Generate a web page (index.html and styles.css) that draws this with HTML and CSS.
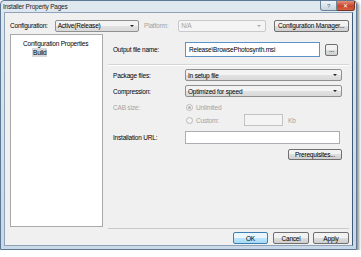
FILE: index.html
```html
<!DOCTYPE html>
<html lang="en">
<head>
    <meta charset="UTF-8">
    <title>Installer Property Pages</title>
    <link rel="stylesheet" href="styles.css">
</head>
<body>
    <div class="window">
        <div class="titlebar">
            <span class="title">Installer Property Pages</span>
            <div class="caption">
                <span class="cap help">?</span>
                <span class="cap close">&#x2715;</span>
            </div>
        </div>
        <div class="client">
            <div class="config-bar">
                <span class="label">Configuration:</span>
                <div class="combo config-combo"><span>Active(Release)</span><span class="arrow"></span></div>
                <span class="label disabled platform-label">Platform:</span>
                <div class="combo platform-combo disabled"><span>N/A</span><span class="arrow"></span></div>
                <button class="btn manager-btn">Configuration Manager...</button>
            </div>
            <div class="main">
                <div class="tree">
                    <div class="node">Configuration Properties</div>
                    <div class="node child"><span class="selected">Build</span></div>
                </div>
                <div class="pane">
                    <div class="row output-row">
                        <span class="field-label">Output file name:</span>
                        <div class="textbox focused output-box">Release\BrowsePhotosynth.msi</div>
                        <button class="btn browse-btn">...</button>
                    </div>
                    <div class="separator"></div>
                    <div class="row combo-row">
                        <span class="field-label">Package files:</span>
                        <div class="combo wide"><span>In setup file</span><span class="arrow"></span></div>
                    </div>
                    <div class="row combo-row">
                        <span class="field-label">Compression:</span>
                        <div class="combo wide"><span>Optimized for speed</span><span class="arrow"></span></div>
                    </div>
                    <div class="row radio-row">
                        <span class="field-label disabled">CAB size:</span>
                        <span class="radio checked"></span>
                        <span class="disabled">Unlimited</span>
                    </div>
                    <div class="row custom-row">
                        <span class="field-label"></span>
                        <span class="radio"></span>
                        <span class="disabled custom-label">Custom:</span>
                        <div class="textbox disabled-box small-box"></div>
                        <span class="disabled kb">Kb</span>
                    </div>
                    <div class="row url-row">
                        <span class="field-label">Installation URL:</span>
                        <div class="textbox url-box"></div>
                    </div>
                    <div class="prereq">
                        <button class="btn prereq-btn">Prerequisites...</button>
                    </div>
                </div>
            </div>
            <div class="footer">
                <button class="btn default-btn">OK</button>
                <button class="btn">Cancel</button>
                <button class="btn">Apply</button>
            </div>
        </div>
    </div>
</body>
</html>
```

FILE: styles.css
```css
body {
    margin: 0;
    padding: 0;
    background-color: #fff;
    font-family: "Liberation Sans", Arial, sans-serif;
    font-size: 6.5px;
    letter-spacing: -0.2px;
    color: #000;
}
.window {
    width: 355px;
    height: 248px;
    border: 1px solid #5d7893;
    border-radius: 4px 4px 0 0;
    background: linear-gradient(#dfe7ef, #c9d8e7);
    box-shadow: 2px 2px 3px rgba(0, 0, 0, 0.45);
    display: flex;
    flex-direction: column;
}
.titlebar {
    height: 11px;
    display: flex;
    align-items: center;
    justify-content: space-between;
    padding-left: 2px;
}
.title {
    color: #1b1b1b;
}
.caption {
    display: flex;
    align-self: flex-start;
    margin-right: 1px;
}
.cap {
    height: 9px;
    display: flex;
    align-items: center;
    justify-content: center;
    font-size: 6px;
    border: 1px solid #6f8397;
    border-top: none;
    color: #fff;
}
.help {
    width: 15px;
    background: linear-gradient(#eef3f8, #c6d3e0);
    color: #51667c;
    border-radius: 0 0 0 3px;
}
.close {
    width: 17px;
    background: linear-gradient(#e58f7c, #c8432c 55%, #d4603f);
    border-left: none;
    border-color: #7a3024;
    border-radius: 0 0 3px 0;
}
.client {
    flex: 1;
    margin: 0 3px 3px 3px;
    background: #f0f0f0;
    border: 1px solid #8ea3b9;
    border-right-color: #3f5b78;
    display: flex;
    flex-direction: column;
    padding: 0 3px 0 5px;
}
.config-bar {
    display: flex;
    align-items: center;
    margin-top: 6px;
    height: 13px;
}
.label {
    margin-right: 7px;
}
.disabled {
    color: #a3a3a3;
}
.combo {
    height: 10px;
    border: 1px solid #8f9090;
    border-radius: 2px;
    background: linear-gradient(#f3f3f3 45%, #e2e2e2 50%, #d9d9d9);
    display: flex;
    align-items: center;
    justify-content: space-between;
    padding: 0 4px 0 2px;
    box-sizing: content-box;
}
.combo.disabled {
    background: #f4f4f4;
    border-color: #c9c9c9;
}
.arrow {
    width: 0;
    height: 0;
    border-left: 2px solid transparent;
    border-right: 2px solid transparent;
    border-top: 2px solid #222;
}
.combo.disabled .arrow {
    border-top-color: #a8a8a8;
}
.config-combo {
    width: 78px;
}
.platform-label {
    margin-left: 5px;
    margin-right: 10px;
}
.platform-combo {
    width: 81px;
}
.btn {
    font-family: inherit;
    font-size: 6.5px;
    letter-spacing: -0.2px;
    color: #000;
    height: 12px;
    padding: 0;
    border: 1px solid #707070;
    border-radius: 2px;
    background: linear-gradient(#f2f2f2 45%, #dedede 50%, #cfcfcf);
    display: flex;
    align-items: center;
    justify-content: center;
}
.manager-btn {
    width: 77px;
    margin-left: 8px;
}
.main {
    flex: 1;
    display: flex;
    margin-top: 2px;
    gap: 5px;
}
.tree {
    width: 91px;
    background: #fff;
    border: 1px solid #a9a9a9;
    margin-bottom: 2px;
    padding-top: 4px;
}
.node {
    padding-left: 12px;
    height: 9px;
    line-height: 9px;
}
.node.child {
    padding-left: 21px;
}
.selected {
    background: #d9d9d9;
    padding: 1px 1px;
}
.pane {
    flex: 1;
    border-bottom: 1px solid #c9c9c9;
    display: flex;
    flex-direction: column;
    padding-left: 5px;
    padding-right: 6px;
}
.row {
    display: flex;
    align-items: center;
}
.field-label {
    width: 72px;
    flex-shrink: 0;
}
.textbox {
    background: #fff;
    border: 1px solid #abadb3;
    box-sizing: border-box;
    display: flex;
    align-items: center;
    padding-left: 3px;
}
.textbox.focused {
    border-color: #5c93c9;
}
.output-row {
    margin-top: 8px;
}
.output-box {
    width: 135px;
    height: 15px;
}
.browse-btn {
    width: 13px;
    height: 12px;
    margin-left: 5px;
}
.separator {
    height: 1px;
    background: #d5d5d5;
    border-bottom: 1px solid #fff;
    margin: 7px -6px 3px -5px;
}
.combo-row {
    margin-bottom: 4px;
}
.wide {
    width: 149px;
}
.radio {
    width: 5px;
    height: 5px;
    border: 1px solid #b9b9b9;
    border-radius: 50%;
    background: #f4f4f4;
    margin-left: 1px;
    margin-right: 3px;
    position: relative;
}
.radio.checked::after {
    content: "";
    position: absolute;
    left: 1px;
    top: 1px;
    width: 3px;
    height: 3px;
    border-radius: 50%;
    background: #b5b5b5;
}
.radio-row {
    height: 10px;
    margin-top: 1px;
}
.custom-row {
    margin-top: 2px;
}
.custom-label {
    width: 48px;
}
.small-box {
    width: 39px;
    height: 12px;
    background: #f4f4f4;
    border-color: #c3c3c3;
}
.kb {
    margin-left: 5px;
}
.url-row {
    margin-top: 5px;
}
.url-box {
    width: 155px;
    height: 13px;
}
.prereq {
    display: flex;
    justify-content: flex-end;
    margin-top: 5px;
    padding-right: 1px;
}
.prereq-btn {
    width: 54px;
    height: 11px;
}
.footer {
    display: flex;
    justify-content: flex-end;
    gap: 4px;
    padding-top: 3px;
    height: 16px;
    box-sizing: border-box;
}
.footer .btn {
    width: 36px;
    height: 12px;
}
.footer .default-btn {
    width: 35px;
    border-color: #3c7fb1;
    background: linear-gradient(#eaf6fd 45%, #bee6fd 50%, #a7d9f5);
    margin-right: 1px;
}
```
